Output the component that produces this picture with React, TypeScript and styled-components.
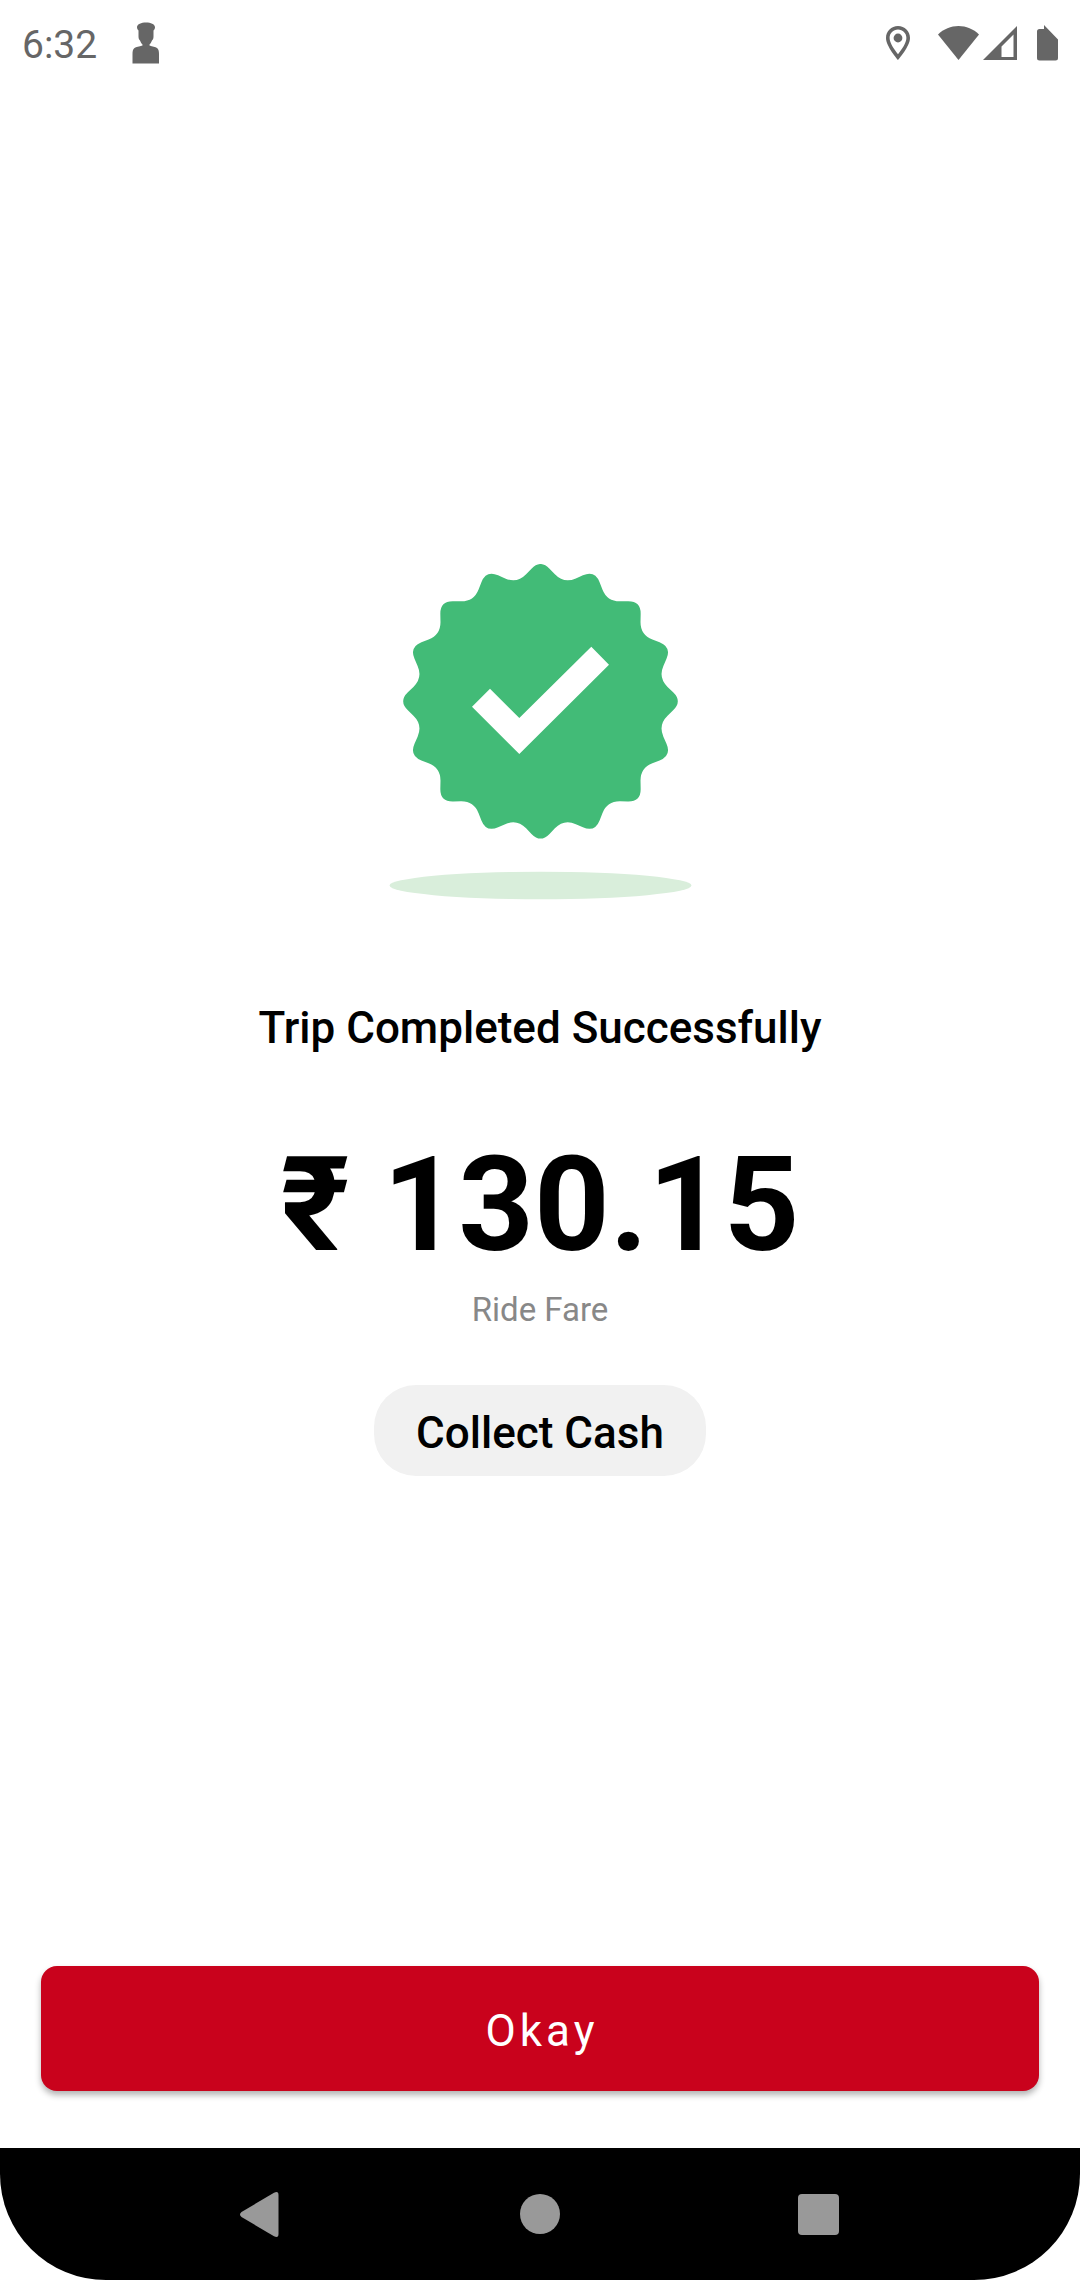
import React from "react";
import styled, { createGlobalStyle } from "styled-components";

const GlobalStyle = createGlobalStyle`
  *, *::before, *::after { box-sizing: border-box; }
  html, body { margin: 0; background: #ffffff; }
  body { font-family: Roboto, "Noto Sans", sans-serif; color: #000000; }
  h1, p { margin: 0; }
`;

const Screen = styled.div`
  min-height: 100vh;
  display: flex;
  flex-direction: column;
  background: #ffffff;
`;

const StatusBar = styled.header`
  display: flex;
  align-items: center;
  justify-content: space-between;
  height: 84px;
  padding: 2px 22px 0;
  color: #666666;
`;

const StatusGroup = styled.div<{ $gap: number }>`
  display: flex;
  align-items: center;
  gap: ${({ $gap }) => $gap}px;
`;

const Clock = styled.time`
  padding-top: 3px;
  font-size: 39px;
  line-height: 48px;
`;

const Glyph = styled.svg`
  display: block;
  flex: none;
  fill: currentColor;
`;

const SignalGroup = styled.div`
  display: flex;
  align-items: center;
  gap: 4px;
`;

const Summary = styled.main`
  flex: 1;
  display: flex;
  flex-direction: column;
  align-items: center;
  justify-content: center;
  text-align: center;
`;

const Title = styled.h1`
  margin-top: 102px;
  font-size: 44px;
  line-height: 52px;
  font-weight: 500;
`;

const Amount = styled.p`
  margin-top: 74px;
  font-size: 132px;
  line-height: 154px;
  font-weight: 700;
`;

const Caption = styled.p`
  margin-top: 8px;
  font-size: 33px;
  line-height: 40px;
  color: #888888;
`;

const PaymentTag = styled.p`
  margin-top: 55px;
  padding: 22px 42px 17px;
  border-radius: 42px;
  background: #f1f1f1;
  font-size: 44px;
  line-height: 52px;
  font-weight: 500;
`;

const Actions = styled.footer`
  padding: 10px 41px 57px;
`;

const PrimaryButton = styled.button`
  display: block;
  width: 100%;
  padding: 39px 24px 34px 28px;
  border: 0;
  border-radius: 16px;
  background: #c9021c;
  box-shadow: 0 4px 6px rgba(0, 0, 0, 0.3);
  color: #ffffff;
  font-family: inherit;
  font-size: 44px;
  line-height: 52px;
  letter-spacing: 4px;
`;

const NavBar = styled.nav`
  display: flex;
  justify-content: center;
  height: 132px;
  padding: 0 122px;
  border-radius: 0 0 106px 106px;
  background: #000000;
`;

const NavButton = styled.button`
  flex: 1;
  display: flex;
  align-items: center;
  justify-content: center;
  padding: 0;
  border: 0;
  background: transparent;
  color: #999999;
`;

type Point = [number, number];

const TEETH = 16;
const TIP_RADIUS = 142;
const VALLEY_RADIUS = 120;
const CORNER = 13;

function sealPath(cx: number, cy: number): string {
  const corners: Point[] = Array.from({ length: TEETH * 2 }, (_, i) => {
    const angle = (i * Math.PI) / TEETH;
    const radius = i % 2 === 0 ? TIP_RADIUS : VALLEY_RADIUS;
    return [cx + radius * Math.sin(angle), cy - radius * Math.cos(angle)];
  });
  const toward = (from: Point, to: Point): Point => {
    const length = Math.hypot(to[0] - from[0], to[1] - from[1]);
    const t = CORNER / length;
    return [from[0] + (to[0] - from[0]) * t, from[1] + (to[1] - from[1]) * t];
  };
  const text = (p: Point) => `${p[0].toFixed(2)} ${p[1].toFixed(2)}`;
  const parts = corners.map((corner, i) => {
    const before = corners[(i + corners.length - 1) % corners.length];
    const after = corners[(i + 1) % corners.length];
    return `${i === 0 ? "M" : "L"}${text(toward(corner, before))} Q${text(corner)} ${text(toward(corner, after))}`;
  });
  return `${parts.join(" ")} Z`;
}

function SuccessSeal() {
  return (
    <Glyph width="303" height="336" viewBox="0 0 303 336" role="img" aria-label="Success">
      <path d={sealPath(151.5, 137.3)} fill="#42bb77" />
      <path d="M83 142.7 101 124.7 130.3 154 202.3 82.7 220 100.7 130.3 190Z" fill="#ffffff" />
      <ellipse cx="151.5" cy="321.5" rx="151" ry="13.7" fill="#d9eedb" />
    </Glyph>
  );
}

export default function App() {
  return (
    <>
      <GlobalStyle />
      <Screen>
        <StatusBar>
          <StatusGroup $gap={35}>
            <Clock>6:32</Clock>
            <Glyph width="28" height="42" viewBox="0 0 28 42" aria-hidden="true">
              <path d="M5 5C5.500 2 9 .500 14 .500S22.500 2 23 5c0 1.500-.500 2.500-1.500 3.500v6c0 2-.500 3-1.500 4-.500 1.500-1.500 3-2.500 4v1c3 1 6 1.500 7.500 2.500 1.500 1 2 3 2 6v9.500H.500V32c0-3 .500-5 2-6C4 25 7 24.500 10.500 23.500v-1c-1-1-2-2.500-2.500-4-1-1-1.500-2-1.500-4v-6C5.500 7.500 5 6.500 5 5Z" />
            </Glyph>
          </StatusGroup>
          <StatusGroup $gap={20}>
            <StatusGroup $gap={28}>
              <Glyph width="24" height="34" viewBox="0 0 24 34" aria-hidden="true">
                <path
                  fillRule="evenodd"
                  d="M12 0C5.300 0 0 5.300 0 12c0 8.500 12 22 12 22s12-13.500 12-22C24 5.300 18.700 0 12 0Zm0 3.600c4.700 0 8.400 3.700 8.400 8.400 0 5-5 12-8.400 16.200C8.600 24 3.600 17 3.600 12c0-4.700 3.700-8.400 8.400-8.400Z"
                />
                <circle cx="12" cy="12" r="4.400" />
              </Glyph>
              <SignalGroup>
                <Glyph width="41" height="34" viewBox="0 0 41 34" aria-hidden="true">
                  <path d="M0 8.500C5.500 3 13 0 20.500 0S35.500 3 41 8.500L20.500 34Z" />
                </Glyph>
                <Glyph width="34" height="34" viewBox="0 0 34 34" aria-hidden="true">
                  <path fillRule="evenodd" d="M34 0v34H0ZM30.500 8.500 18.500 20.500v10.500H30.500Z" />
                </Glyph>
              </SignalGroup>
            </StatusGroup>
            <Glyph width="21" height="36" viewBox="0 0 21 36" aria-hidden="true">
              <path d="M7 0 21 14.500V33q0 2.500-2.500 2.500H2.500Q0 35.500 0 33V6.500Q0 4 2.500 4H7Z" />
            </Glyph>
          </StatusGroup>
        </StatusBar>

        <Summary>
          <SuccessSeal />
          <Title>Trip Completed Successfully</Title>
          <Amount>₹ 130.15</Amount>
          <Caption>Ride Fare</Caption>
          <PaymentTag>Collect Cash</PaymentTag>
        </Summary>

        <Actions>
          <PrimaryButton type="button">Okay</PrimaryButton>
        </Actions>

        <NavBar aria-label="System navigation">
          <NavButton type="button" aria-label="Back">
            <Glyph width="43" height="45" viewBox="0 0 43 45" aria-hidden="true">
              <path d="M34 .800Q38.500-1.500 38.500 3V42Q38.500 46.500 34 44.200L1.500 25Q-1.500 22.500 1.500 20Z" />
            </Glyph>
          </NavButton>
          <NavButton type="button" aria-label="Home">
            <Glyph width="40" height="40" viewBox="0 0 40 40" aria-hidden="true">
              <circle cx="20" cy="20" r="20" />
            </Glyph>
          </NavButton>
          <NavButton type="button" aria-label="Recent apps">
            <Glyph width="41" height="41" viewBox="0 0 41 41" aria-hidden="true">
              <rect width="41" height="41" rx="4" />
            </Glyph>
          </NavButton>
        </NavBar>
      </Screen>
    </>
  );
}
